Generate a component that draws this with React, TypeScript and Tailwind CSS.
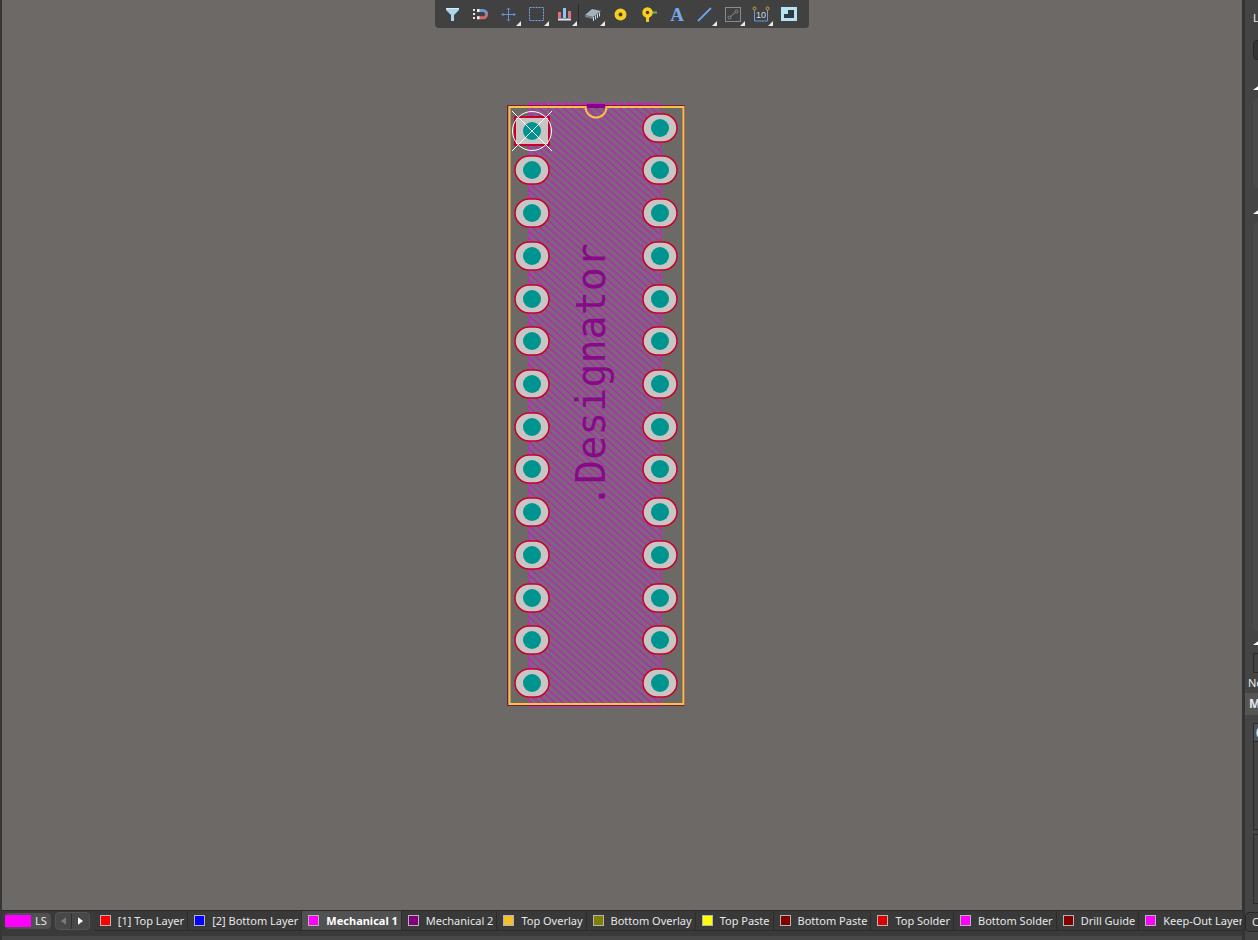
import type { ReactNode } from "react";

const layers = [
  { name: "[1] Top Layer", color: "#ff0000" },
  { name: "[2] Bottom Layer", color: "#0000ff" },
  { name: "Mechanical 1", color: "#ff00ff", active: true },
  { name: "Mechanical 2", color: "#800080" },
  { name: "Top Overlay", color: "#f5c02e" },
  { name: "Bottom Overlay", color: "#808000" },
  { name: "Top Paste", color: "#ffff00" },
  { name: "Bottom Paste", color: "#800000" },
  { name: "Top Solder", color: "#d80000" },
  { name: "Bottom Solder", color: "#ff00ff" },
  { name: "Drill Guide", color: "#800000" },
  { name: "Keep-Out Layer", color: "#ff00ff" },
];

const tools: { label: string; menu?: boolean; divided?: boolean; icon: ReactNode }[] = [
  {
    label: "Filter",
    icon: (
      <>
        <path d="M4 4h13v2l-5 5v6H9v-6L4 6z" fill="#a9d6ea" />
        <path d="M4 4h13v1H4z" fill="#d8f0f8" />
      </>
    ),
  },
  {
    label: "Snapping",
    icon: (
      <>
        <path d="M3 5h2v2H3zM3 9h2v2H3zM3 13h2v2H3z" fill="#e6e6e6" />
        <path d="M9 6.500h4a3.700 3.700 0 0 1 3.700 3.700" fill="none" stroke="#6c94d8" strokeWidth="3" />
        <path d="M16.700 10a3.700 3.700 0 0 1-3.700 3.800H9" fill="none" stroke="#d9656d" strokeWidth="3" />
        <path d="M7 6.500h2.500M7 13.800h2.500" stroke="#eeeeee" strokeWidth="3" />
      </>
    ),
  },
  { label: "Move", menu: true, icon: <path d="M10.500 4v13M4 10.500h13M9 5.500l1.500-1.500L12 5.500M9 15.500l1.500 1.500 1.500-1.500M5.500 9L4 10.500 5.500 12M15.500 9l1.500 1.500-1.500 1.500" fill="none" stroke="#6c90d8" /> },
  { label: "Select area", menu: true, icon: <rect x="3.500" y="3.500" width="14" height="13" fill="none" stroke="#7fa2e6" strokeDasharray="2 1" /> },
  {
    label: "Align",
    menu: true,
    icon: (
      <>
        <path d="M4 8h3v6H4zM14 7h3v7h-3z" fill="#e0707a" />
        <path d="M9 4h3v10H9z" fill="#8dc6f0" />
        <path d="M4 15.500h13" stroke="#d4e7f3" strokeWidth="2" />
      </>
    ),
  },
  {
    label: "Place component",
    menu: true,
    divided: true,
    icon: (
      <>
        <path d="M3 11L10 5l9 2-8 6z" fill="#a3b3be" />
        <path d="M3 11l8 2v2l-8-2z" fill="#74828c" />
        <path d="M11.500 13v4M13.500 11.500v4M15.500 10v4M17.500 8.500v4" stroke="#c8dbe8" />
      </>
    ),
  },
  { label: "Place pad", icon: <circle cx="10.500" cy="10.500" r="4" fill="#4b3c12" stroke="#f7ce26" strokeWidth="4" /> },
  {
    label: "Place via",
    icon: (
      <>
        <path d="M9.500 10v8" stroke="#f3c623" strokeWidth="3" />
        <path d="M13 8.500h6" stroke="#66b84c" strokeWidth="2" />
        <circle cx="9.500" cy="8.500" r="3.500" fill="#4b3c12" stroke="#f7ce26" strokeWidth="3.500" />
      </>
    ),
  },
  { label: "Place string", icon: <text x="11" y="17" textAnchor="middle" fontFamily="Liberation Serif, serif" fontWeight="bold" fontSize="19" fill="#78a9ea">A</text> },
  { label: "Place line", menu: true, icon: <path d="M4 17L17 4" stroke="#6ca3ec" strokeWidth="1.800" /> },
  {
    label: "Place room",
    menu: true,
    icon: (
      <>
        <rect x="3.500" y="3.500" width="15" height="14" fill="none" stroke="#8a8a8a" />
        <path d="M8.500 12.500l5-4" stroke="#8a8a8a" />
        <circle cx="7.500" cy="13.500" r="1.500" fill="none" stroke="#8a8a8a" />
        <circle cx="14.500" cy="7.500" r="1.500" fill="none" stroke="#8a8a8a" />
      </>
    ),
  },
  {
    label: "Place dimension",
    menu: true,
    icon: (
      <>
        <path d="M4.500 6v11h13V6" fill="none" stroke="#6c98dc" />
        <circle cx="4.500" cy="4.500" r="1.500" fill="none" stroke="#cba62b" />
        <circle cx="17.500" cy="4.500" r="1.500" fill="none" stroke="#cba62b" />
        <text x="11" y="14" textAnchor="middle" fontFamily="Liberation Sans, sans-serif" fontSize="9" fill="#d8d8d8">10</text>
      </>
    ),
  },
  {
    label: "Place region",
    icon: (
      <>
        <path d="M3 3h16v14H3z" fill="#b9e2f2" />
        <path d="M10 6h6v8H6v-4h4z" fill="#2e3b44" />
      </>
    ),
  },
];

const pinRows = [170, 213, 256, 299, 341, 384, 427, 469, 512, 555, 598, 640, 683];

function Pad({ x, y }: { x: number; y: number }) {
  return (
    <g>
      <rect x={x - 17} y={y - 14} width="34" height="28" rx="14" fill="#c8c5c5" stroke="#c90028" strokeWidth="1.500" />
      <circle cx={x} cy={y} r="9" fill="#009490" />
    </g>
  );
}

function Footprint() {
  return (
    <svg viewBox="2 0 1240 910" className="block h-full w-full" role="img" aria-label="Component footprint">
      <defs>
        <pattern id="hatch" width="8" height="7" patternUnits="userSpaceOnUse">
          <path d="M-8 -7L16 14M0 -7L16 7M-8 0L8 14" stroke="#a338a0" strokeWidth="2" />
        </pattern>
      </defs>
      <rect x="528" y="103" width="133" height="604" fill="#7e647c" />
      <rect x="528" y="103" width="133" height="604" fill="url(#hatch)" />
      <text transform="translate(605 508) rotate(-90)" fontFamily="DejaVu Sans Mono, monospace" fontSize="40" fill="#860088" fillOpacity="0.88">.Designator</text>
      <path d="M528.500 103v604M660.500 103v604" stroke="#e010d8" strokeDasharray="5 1" />
      <path d="M528 104h133M528 706h133" stroke="#d815d0" strokeWidth="2" strokeDasharray="5 2" />
      {pinRows.map((y) => (
        <g key={y}>
          <Pad x={532} y={y} />
          <Pad x={660} y={y} />
        </g>
      ))}
      <Pad x={660} y={128} />
      <rect x="515" y="117" width="34" height="28" fill="#c8c5c5" stroke="#c90028" strokeWidth="2" />
      <circle cx="532" cy="131" r="9" fill="#009490" />
      <path d="M507.500 105.500h177V705.500H507.500z" fill="none" stroke="#70203c" />
      <path d="M509.500 107H585.500a10.500 10.500 0 0 0 21 0h77V704H509.500z" fill="none" stroke="#ffbe48" strokeWidth="2" />
      <path d="M587 104h18v4h-18z" fill="#8a008f" />
      <circle cx="532" cy="131" r="19.500" fill="none" stroke="#fff" />
      <path d="M512 111l40 40M552 111l-40 40" stroke="#fff" />
    </svg>
  );
}

function Toolbar() {
  return (
    <div role="toolbar" aria-label="Active bar" className="absolute inset-x-0 top-0 flex justify-center">
      <div className="flex h-7 rounded-b-sm bg-[#414141] pr-[7px] pl-[3px]">
        {tools.map((tool) => (
          <button key={tool.label} aria-label={tool.label} className="relative flex h-7 w-7 items-center justify-center">
            {tool.divided && <span className="absolute top-1 bottom-1 left-0 w-px bg-[#2b2b2b]" />}
            <svg viewBox="0 0 20 20" className="h-5 w-5">
              {tool.icon}
            </svg>
            {tool.menu && (
              <svg viewBox="0 0 5 5" className="absolute right-px bottom-0.5 h-[5px] w-[5px]">
                <path d="M5 0v5H0z" fill="#e8e8e8" />
              </svg>
            )}
          </button>
        ))}
      </div>
    </div>
  );
}

function Caret() {
  return (
    <svg viewBox="0 0 8 6" className="ml-2 h-1.5 w-2 shrink-0">
      <path d="M8 0v6H0z" fill="#fff" />
    </svg>
  );
}

function SidePanel() {
  return (
    <aside className="flex w-4 shrink-0 flex-col overflow-hidden border-l-3 border-[#333333] bg-[#444444] whitespace-nowrap">
      <div className="flex h-9 shrink-0 items-center pl-2">Library</div>
      <div className="mt-1 ml-2 h-5 w-10 shrink-0 rounded border border-[#282828] bg-[#353535]" />
      <div className="mt-6 flex shrink-0"><Caret /></div>
      <div className="mt-2 ml-2 h-[90px] w-10 shrink-0 rounded bg-[#4a4a4a]" />
      <div className="mt-5 flex shrink-0"><Caret /></div>
      <div className="mt-2 ml-2 min-h-0 w-10 flex-1 rounded bg-[#4a4a4a]" />
      <div className="mt-2 flex shrink-0"><Caret /></div>
      <div className="mt-2 ml-2 h-5 w-10 shrink-0 border border-[#292929]" />
      <div className="flex h-5 shrink-0 items-center pl-[3px]">Nets</div>
      <div className="flex h-[22px] shrink-0 items-center bg-[#555555] pl-1 text-[12px] font-bold">Model</div>
      <div className="mt-2 ml-2 h-[107px] w-10 shrink-0 border border-[#292929]">
        <div className="h-[18px] border-b border-[#292929] bg-[#4c5259] pl-0.5 font-bold">(All)</div>
      </div>
      <div className="mt-1 ml-2 h-[70px] w-10 shrink-0 border border-[#292929]" />
      <button className="mt-2 h-5 w-16 shrink-0 rounded border border-[#272727] bg-[#3d3d3d] pl-1.5 text-left">Components</button>
      <div className="h-2 shrink-0" />
    </aside>
  );
}

function LayerBar() {
  return (
    <div className="flex h-[21px] shrink-0 items-stretch overflow-hidden border-t border-[#292929] pl-[3px] whitespace-nowrap">
      <button className="my-0.5 flex shrink-0 items-center rounded-sm bg-[#505050] pr-1">
        <span className="mr-1 h-3 w-[26px] bg-[#ff00ff]" />
        LS
      </button>
      <div className="my-px mr-1 ml-1 flex shrink-0 rounded-sm border border-[#555555] bg-[#484848]">
        <button aria-label="Previous layers" className="flex w-4 items-center justify-center border-r border-[#303030]">
          <svg viewBox="0 0 4 6" className="h-2 w-[5px]"><path d="M4 0v6L0 3z" fill="#7b7b7b" /></svg>
        </button>
        <button aria-label="Next layers" className="flex w-[17px] items-center justify-center">
          <svg viewBox="0 0 4 6" className="h-2 w-[5px]"><path d="M0 0v6l4-3z" fill="#fff" /></svg>
        </button>
      </div>
      {layers.map((layer) => (
        <button
          key={layer.name}
          className={
            layer.active
              ? "flex shrink-0 items-center gap-[7px] border-r border-b border-[#2c2c2c] bg-[#515151] pr-[3px] pl-1.5 font-bold text-white"
              : "flex shrink-0 items-center gap-[7px] border-r border-b border-[#2c2c2c] bg-[#393939] pr-[3px] pl-1.5"
          }
        >
          <span className="h-[11px] w-[11px] border border-[#b5b5b5]" style={{ backgroundColor: layer.color }} />
          {layer.name}
        </button>
      ))}
    </div>
  );
}

export default function App() {
  return (
    <div className="flex h-screen min-h-0 overflow-hidden bg-[#3a3a3a] font-['Noto_Sans',sans-serif] text-[11px] leading-4 text-[#e8e8e8]">
      <div className="flex min-w-0 flex-1 flex-col border-l-2 border-[#363636]">
        <main className="relative min-h-0 flex-1 bg-[#6d6967]">
          <Footprint />
          <Toolbar />
        </main>
        <LayerBar />
        <footer className="h-[9px] shrink-0 border-b-4 border-[#484848]" />
      </div>
      <SidePanel />
    </div>
  );
}
